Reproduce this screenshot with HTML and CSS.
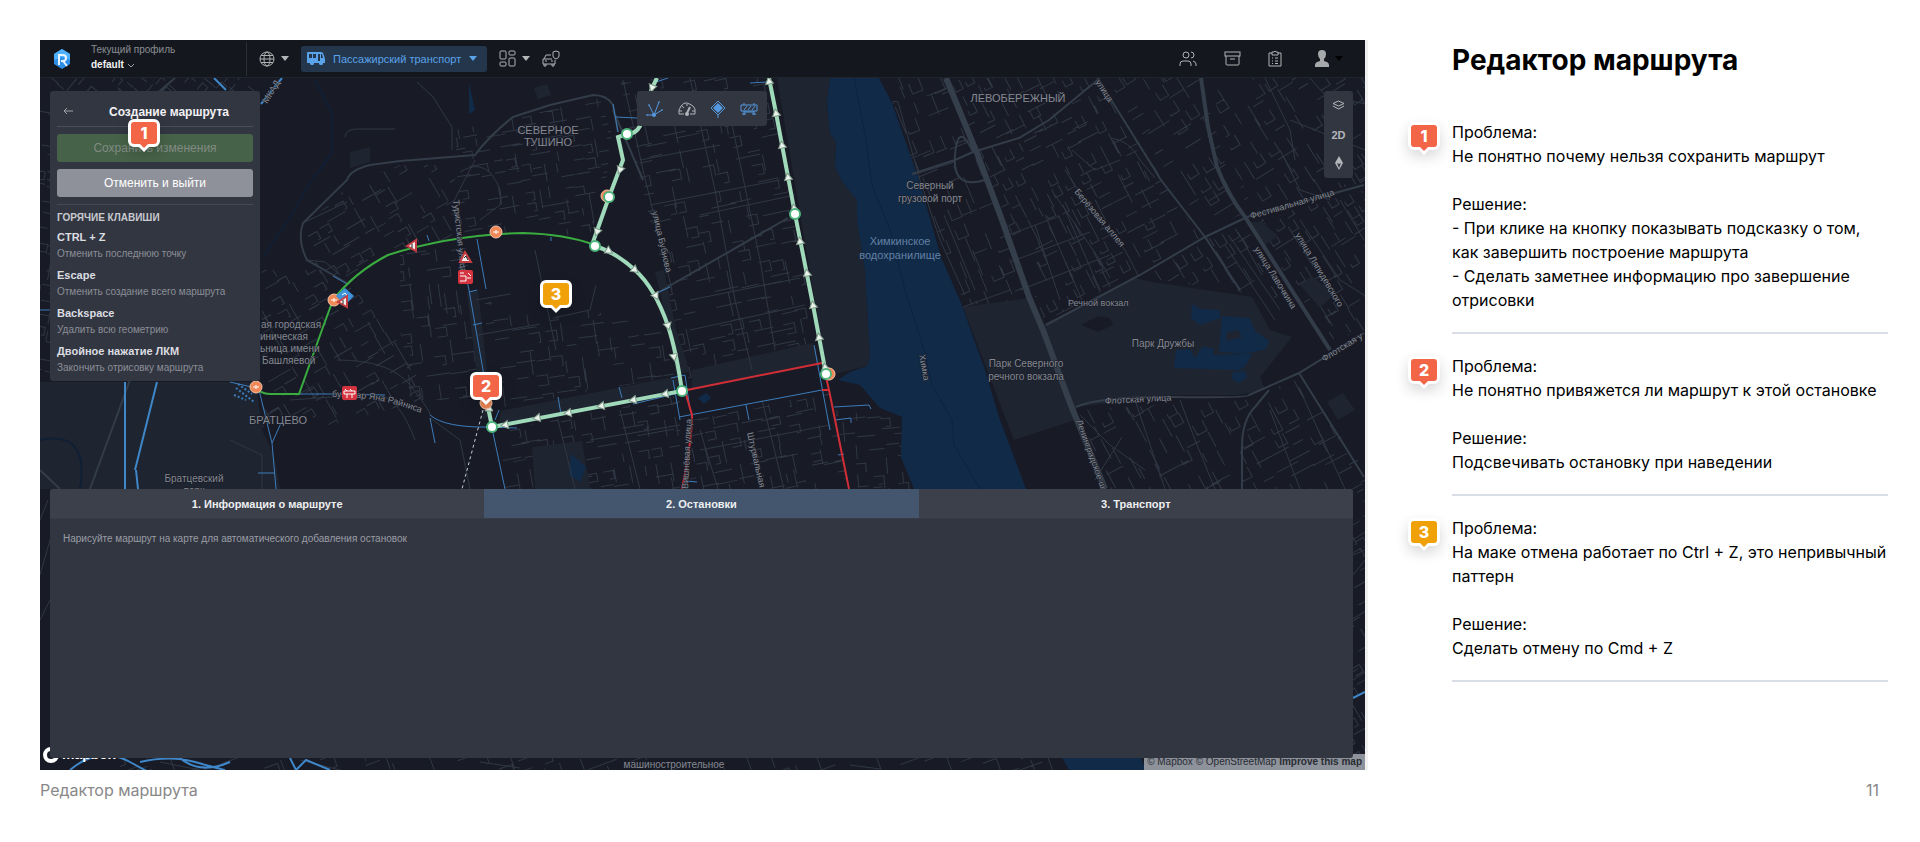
FILE: index.html
```html
<!DOCTYPE html>
<html lang="ru">
<head>
    <meta charset="utf-8">
    <title>Редактор маршрута</title>
    <link rel="stylesheet" href="styles.css">
</head>
<body>
    <main class="slide">
        <div class="figure">
            <div class="app">
                <svg class="map" viewBox="40 40 1325 730" preserveAspectRatio="xMinYMin slice" aria-label="Карта">
                    <rect class="land" x="40" y="40" width="2000" height="1200"/>
                    <g id="streets" class="street"></g>

                    <!-- parks -->
                    <g class="park">
                        <path d="M777 78H830L827 103 830 133 836 142 835 167 843 183 857 200 857 220 865 270 870 357 867 366 838 373 827 372Z"/>
                        <path d="M963 307L1029 298 1042 325 1135 278 1152 282 1252 297 1270 330 1292 337 1260 377 1265 390 1238 395 1174 395 1076 407 1075 420 1014 440Z"/>
                        <path d="M692 370L812 343 820 362 692 389Z"/>
                        <path d="M500 411L678 376 680 388 500 426Z"/>
                        <path d="M532 447L582 441 590 489H535Z"/>
                        <path d="M655 272L664 270 676 330 690 372 676 374 662 300Z"/>
                        <path d="M467 292L478 290 492 415 482 420Z"/>
                        <path d="M40 382H256L262 430 290 489H40Z"/>
                        <path d="M1248 222L1262 222 1278 236 1264 246Z"/>
                        <path d="M1327 402L1343 393 1355 410 1338 420Z"/>
                        <path d="M1300 285L1312 276 1334 294 1320 308Z"/>
                        <path d="M350 152L370 147V162L350 168Z"/>
                        <path d="M534 88L547 84 551 95 538 99Z"/>
                    </g>
                    <path class="land" d="M1081 325L1098 316 1110 318 1113 325 1098 332Z"/>
                    <path class="land" d="M270 430Q290 420 330 425L345 440 405 447 420 489H280Z"/>

                    <!-- water -->
                    <g class="water">
                        <path d="M830 78H879L892 103 919 180 941 257 961 303 985 370 999 417 1026 489 1146 770H1069L914 489 901 457 902 417 880 408 860 385 838 380 850 372 867 366 870 357 865 270 857 220 857 200 843 183 835 167 836 142 830 133 827 103Z"/>
                        <path d="M1192 304L1200 309 1219 310 1221 318 1200 325 1191 318Z"/>
                        <path d="M1222 316L1250 318 1255 331 1269 341 1266 349 1245 354 1219 352Z"/>
                        <path d="M1176 350L1190 349 1195 358 1202 347 1214 348 1213 355 1252 354 1246 365 1240 370 1174 368Z"/>
                        <path d="M1233 372L1245 371 1247 378 1239 383 1232 379Z"/>
                        <path d="M698 398L706 393 711 398 704 404Z"/>
                        <path d="M469 83L475 110 469 114Z"/>
                        <path d="M571 454L586 467 580 482 569 475Z"/>
                    </g>
                    <path class="park" d="M1227 332L1238 330 1242 337 1226 341Z"/>
                    <path class="stream" d="M854 78L866 140 872 185 890 230 905 290 924 350 932 385 952 420 954 445 980 489"/>
                    <path class="creek" d="M315 80L332 113 332 153 307 187 293 213 263 257M40 440Q90 430 80 489"/>

                    <!-- streets drawn one by one -->
                    <g class="street">
                        <path d="M417 82L433 97 452 127V150M475 160L463 183 453 203M345 137Q345 128 362 129L395 129M303 223L347 202M307 260L325 262 340 275M460 172Q480 160 492 175T500 205L480 220"/>
                        <path d="M623 80L643 170 660 240 672 290M690 78L715 190 735 300 752 370M725 90L760 260 775 350M640 160L720 145M650 205L780 180M700 215L795 195M690 300L800 278M690 330L805 305"/>
                        <path d="M620 130L645 125M535 250L556 350M553 318L590 310 596 285M476 300L510 294M478 335L540 324M558 420L575 489M620 410L640 489M700 430L718 489M590 440L680 425M762 400L784 489M700 450L830 425"/>
                        <path d="M894 104Q890 100 898 102L920 180 940 240 965 295M912 175L955 162M944 215L975 290M963 307L1010 290M1000 238L1060 216M1020 290L1110 255M1045 215L1082 300M1063 205L1100 290M1035 225L1060 300M1010 262L1090 232"/>
                        <path d="M1055 195L1100 260 1110 278M1065 170L1095 215 1125 250 1138 275M1110 138Q1130 140 1140 160L1155 178M1072 150L1095 170 1120 160"/>
                        <path d="M1122 437L1095 480M1080 415L1110 445 1145 470M1180 400L1195 440 1215 489M1135 400L1165 489M1270 410L1300 489M1300 390L1345 489M1225 245L1275 320M1232 240L1280 310M1238 232L1262 275"/>
                        <path d="M1310 78L1325 95 1365 104M1265 78L1290 130 1295 160M1290 120L1365 150M1280 150L1300 190 1330 200M1300 220L1340 280 1364 295M1340 200L1364 240"/>
                        <path d="M337 360Q390 360 410 385T430 415M290 400L360 395M415 440Q400 400 380 395M430 418L460 440 470 489M230 440L262 455V489"/>
                        <path d="M40 520L48 500M40 575L50 540M40 620L50 600M1353 540L1365 532M1353 555L1365 550M1353 575L1365 560M1353 680L1365 672M160 762L200 770M300 760L340 770M480 762L520 768M850 765L880 769"/>
                    </g>
                    <g class="road">
                        <path d="M400 161L475 155Q490 135 513 117L550 105 593 95Q607 95 613 105L618 132M400 161L370 165Q350 170 347 180L303 223Q297 240 307 260L347 283"/>
                        <path d="M657 293L788 218M613 110L643 180M955 160L973 152 1019 138 1049 120 1100 78M973 152Q958 120 955 155T985 180M912 174L955 160"/>
                        <path d="M1097 77L1161 180 1205 237 1240 290M1046 325L1140 275 1205 237 1247 217 1364 185"/>
                        <path d="M1076 407Q1100 396 1174 397T1249 395L1299 373 1364 333M1242 489V447Q1242 420 1255 407L1269 390M1299 373L1364 477"/>
                        <path d="M90 489L130 380M40 470L60 489M120 125L175 78"/>
                    </g>
                    <path class="road road-wide" d="M1201 78L1208 127 1217 167Q1228 195 1245 217L1330 350"/>
                    <path class="road highway" d="M946 78L977 153 1002 220 1029 297 1043 330 1070 403 1105 489"/>

                    <!-- segments with data -->
                    <g class="segment">
                        <path class="segment-wide" d="M282 78L261 104M136 470L138 489M157 382L135 470M125 382V489M214 78L226 90"/>
                        <path d="M477 239L486 289M460 248L469 290 483 370 493 433 505 489M469 292L477 290M473 325L482 323M259 390L272 443 276 489M230 382L256 388M272 443L281 423M258 473H275M297 394H332L385 395"/>
                        <path d="M430 415Q445 428 491 427L517 428M430 418L435 443M495 420L499 410M558 397L561 414M619 387L622 398M633 404L675 394"/>
                        <path d="M679 417L822 390M671 378L685 375 690 410M673 380L680 420M814 345L830 430M834 407L869 405 871 409M746 405L749 420M835 420L851 418V423M838 455L844 454"/>
                        <path d="M613 104L618 132M615 117L637 118M657 293L670 287M750 83L768 82M656 82L668 78M551 237V241M427 235L429 241M333 276L347 284M40 310H52M686 481L697 482"/>
                        <path class="segment-wide" d="M70 770Q100 745 130 762T150 770M140 762Q170 755 195 762T225 770M290 758L296 770 306 760 330 770M180 758Q200 775 230 762M1353 698L1365 692"/>
                    </g>
                    <path class="segment-dots" d="M236 388L254 402M234 395L246 400M238 384L252 394"/>
                    <path class="closed" d="M687 390L822 363M685 391L692 415Q692 440 682 489M826 377L829 390 849 489M822 390H829"/>
                    <path class="loaded" d="M256 387Q260 394 270 394H299L323 327 333 300Q355 272 388 255 450 235 523 233 565 234 595 245"/>
                    <path class="draft" d="M483 410L462 489"/>

                    <!-- the route itself -->
                    <g class="route">
                        <path d="M657 78L652 88 640 126Q636 134 627 134L618 137 623 160 609 197 593 242 595 246Q615 252 635 270T668 326Q676 350 682 391L492 427 487 402"/>
                        <path d="M769 78L776 113 795 214 813 305 826 374"/>
                    </g>
                    <g class="direction">
                        <path transform="translate(652 88) rotate(200)" d="M0-4L4 3H-4Z"/>
                        <path transform="translate(620 170) rotate(200)" d="M0-4L4 3H-4Z"/>
                        <path transform="translate(597 232) rotate(200)" d="M0-4L4 3H-4Z"/>
                        <path transform="translate(609 251) rotate(120)" d="M0-4L4 3H-4Z"/>
                        <path transform="translate(635 270) rotate(130)" d="M0-4L4 3H-4Z"/>
                        <path transform="translate(656 296) rotate(150)" d="M0-4L4 3H-4Z"/>
                        <path transform="translate(668 326) rotate(165)" d="M0-4L4 3H-4Z"/>
                        <path transform="translate(674 357) rotate(170)" d="M0-4L4 3H-4Z"/>
                        <path transform="translate(665 394) rotate(-100)" d="M0-4L4 3H-4Z"/>
                        <path transform="translate(633 400) rotate(-100)" d="M0-4L4 3H-4Z"/>
                        <path transform="translate(601 406) rotate(-100)" d="M0-4L4 3H-4Z"/>
                        <path transform="translate(568 413) rotate(-100)" d="M0-4L4 3H-4Z"/>
                        <path transform="translate(537 418) rotate(-100)" d="M0-4L4 3H-4Z"/>
                        <path transform="translate(505 425) rotate(-100)" d="M0-4L4 3H-4Z"/>
                        <path transform="translate(489 408)" d="M0-4L4 3H-4Z"/>
                        <path transform="translate(769 81) rotate(-10)" d="M0-4L4 3H-4Z"/>
                        <path transform="translate(776 113) rotate(-10)" d="M0-4L4 3H-4Z"/>
                        <path transform="translate(782 145) rotate(-10)" d="M0-4L4 3H-4Z"/>
                        <path transform="translate(788 177) rotate(-10)" d="M0-4L4 3H-4Z"/>
                        <path transform="translate(794 208) rotate(-10)" d="M0-4L4 3H-4Z"/>
                        <path transform="translate(800 241) rotate(-10)" d="M0-4L4 3H-4Z"/>
                        <path transform="translate(807 273) rotate(-10)" d="M0-4L4 3H-4Z"/>
                        <path transform="translate(813 305) rotate(-10)" d="M0-4L4 3H-4Z"/>
                        <path transform="translate(819 337) rotate(-10)" d="M0-4L4 3H-4Z"/>
                        <path transform="translate(825 367) rotate(-10)" d="M0-4L4 3H-4Z"/>
                    </g>

                    <!-- map labels -->
                    <g class="label">
                        <g class="label-district">
                            <text x="548" y="134">СЕВЕРНОЕ</text>
                            <text x="548" y="146">ТУШИНО</text>
                            <text x="1018" y="102">ЛЕВОБЕРЕЖНЫЙ</text>
                            <text x="278" y="424">БРАТЦЕВО</text>
                        </g>
                        <text x="930" y="189">Северный</text>
                        <text x="930" y="202">грузовой порт</text>
                        <text x="1163" y="347">Парк Дружбы</text>
                        <text x="1026" y="367">Парк Северного</text>
                        <text x="1026" y="380">речного вокзала</text>
                        <text x="194" y="482">Братцевский</text>
                        <text x="194" y="494">парк</text>
                        <text x="674" y="768">машиностроительное</text>
                        <g class="label-start">
                            <text x="261" y="328">ая городская</text>
                            <text x="260" y="340">иническая</text>
                            <text x="260" y="352">ьница имени</text>
                            <text x="262" y="364">Башляевой</text>
                        </g>
                        <g class="label-water">
                            <text x="900" y="245">Химкинское</text>
                            <text x="900" y="259">водохранилище</text>
                        </g>
                        <g class="label-street">
                            <path id="rainisa" class="label-line" d="M332 397Q385 396 430 417"/>
                            <text><textPath href="#rainisa">бульвар Яна Райниса</textPath></text>
                            <text x="1068" y="306">Речной вокзал</text>
                            <text transform="translate(267 104) rotate(-58)">МКАД</text>
                            <text transform="translate(453 200) rotate(84)">Туристская улица</text>
                            <text transform="translate(652 212) rotate(77)">улица Бубнова</text>
                            <text transform="translate(1095 82) rotate(57)">улица</text>
                            <text transform="translate(1074 192) rotate(50)">Берёзовая аллея</text>
                            <text transform="translate(1251 219) rotate(-16)">Фестивальная улица</text>
                            <text transform="translate(1254 249) rotate(58)">улица Лавочкина</text>
                            <text transform="translate(1295 235) rotate(59)">улица Ляпидевского</text>
                            <text transform="translate(1105 404) rotate(-3)">Флотская улица</text>
                            <text transform="translate(1324 362) rotate(-32)">Флотская у</text>
                            <text transform="translate(1076 421) rotate(70)">Ленинградское шоссе</text>
                            <text transform="translate(919 355) rotate(80)">Химка</text>
                            <text transform="translate(747 433) rotate(77)">Штурвальная улица</text>
                            <text transform="translate(688 489) rotate(-87)">Вишнёвая улица</text>
                        </g>
                    </g>

                    <!-- road signs and stops -->
                    <g class="stop">
                        <circle cx="256" cy="387" r="6"/><circle cx="334" cy="300" r="6"/><circle cx="496" cy="232" r="6"/>
                        <circle cx="607" cy="196" r="6"/><circle cx="829" cy="374" r="6"/><circle cx="486" cy="403" r="6"/>
                    </g>
                    <path class="stop-mark" d="M253 387H259M256 385V389M331 300H337M334 298V302M493 232H499M496 230V234"/>
                    <path class="sign-blue" d="M345 288L354 296 345 305 336 296Z"/>
                    <path class="sign-blue-mark" d="M342 295L345 293 348 297"/>
                    <g class="sign-warning">
                        <path d="M407 246L416 240V251Z"/><path d="M338 302L347 296V307Z"/><path d="M465 252L471 262H460Z"/>
                    </g>
                    <path class="sign-warning-mark" d="M412 244V248M343 300V304M464 258L466 256 468 260"/>
                    <g class="sign-closed">
                        <rect x="342" y="386" width="15" height="14" rx="2"/><rect x="458" y="270" width="15" height="14" rx="2"/>
                    </g>
                    <path class="sign-closed-mark" d="M344 391H355V394H344ZM347 394V398M352 394V398M345 389L347 391M350 389L352 391M460 273H464M460 276H466V281H460M468 273L471 276M467 278H471"/>
                    <g class="node">
                        <circle cx="627" cy="134" r="5"/><circle cx="609" cy="197" r="5"/><circle cx="595" cy="246" r="5"/>
                        <circle cx="682" cy="391" r="5"/><circle cx="492" cy="427" r="5"/><circle cx="795" cy="214" r="5"/><circle cx="826" cy="374" r="5"/>
                    </g>
                    <circle class="mapbox-ring" cx="51" cy="755" r="6"/>
                    <text class="mapbox-name" x="62" y="759">mapbox</text>
                </svg>

                <div class="attribution">
                    <a href="#">© Mapbox</a> <a href="#">© OpenStreetMap</a> <a href="#" class="improve">Improve this map</a>
                </div>

                <header class="topbar">
                    <svg class="logo" width="18" height="20" viewBox="0 0 18 20">
                        <path d="M9 0L17 5V15L9 20 1 15V5Z" fill="#2f8fe8"/>
                        <path d="M9 0L17 5V11L9 8 1 11V5Z" fill="#4fb0ff"/>
                        <path d="M6 16V6H10Q13 6 13 9T10 12H8M10 12L14 17" fill="none" stroke="#e8f4ff" stroke-width="2"/>
                    </svg>
                    <button class="profile" type="button">
                        <span class="profile-caption">Текущий профиль</span>
                        <span class="profile-name">default
                            <svg width="8" height="5" viewBox="0 0 8 5"><path d="M1 1L4 4 7 1" fill="none" stroke="#9a9da3"/></svg>
                        </span>
                    </button>
                    <nav class="tools">
                        <button class="tool" type="button" aria-label="Регион">
                            <svg class="line" width="16" height="16" viewBox="0 0 16 16"><circle cx="8" cy="8" r="7"/><ellipse cx="8" cy="8" rx="3" ry="7"/><path d="M1 8H15M2 4.500H14M2 11.500H14"/></svg>
                            <svg class="caret" width="8" height="5" viewBox="0 0 8 5"><path d="M0 0H8L4 5Z"/></svg>
                        </button>
                        <button class="tool tool-active" type="button">
                            <svg width="18" height="15" viewBox="0 0 18 15">
                                <path fill="#5aa2ea" fill-rule="evenodd" d="M1 1H14Q16 1 16.500 3L18 8V12H16A2 2 0 0 1 12 12H7A2 2 0 0 1 3 12H0V2Q0 1 1 1ZM2 3V7H5V3ZM6 3V7H9V3ZM11 3V10H13V3ZM14 3V7H16L15 3Z"/>
                                <circle cx="5" cy="12" r="2" fill="#5aa2ea"/><circle cx="14" cy="12" r="2" fill="#5aa2ea"/>
                            </svg>
                            Пассажирский транспорт
                            <svg class="caret" width="8" height="5" viewBox="0 0 8 5"><path d="M0 0H8L4 5Z"/></svg>
                        </button>
                        <button class="tool" type="button" aria-label="Виджеты">
                            <svg class="line" width="17" height="17" viewBox="0 0 17 17"><rect x="1" y="1" width="6" height="8" rx="1"/><rect x="10" y="1" width="6" height="4" rx="1"/><rect x="1" y="12" width="6" height="4" rx="1"/><rect x="10" y="8" width="6" height="8" rx="1"/></svg>
                            <svg class="caret" width="8" height="5" viewBox="0 0 8 5"><path d="M0 0H8L4 5Z"/></svg>
                        </button>
                        <button class="tool" type="button" aria-label="Безопасность">
                            <svg class="line" width="18" height="17" viewBox="0 0 18 17"><path d="M9 5H4L2 9H1V14H13V10M2 9H10M2 14V16H4V14M10 14V16H12V14M3 11H5M9 11H11M14 1L17 2V6Q17 8 14 9 11 8 11 6V2Z"/></svg>
                        </button>
                    </nav>
                    <div class="account">
                        <button class="tool" type="button" aria-label="Пользователи">
                            <svg class="line" width="18" height="17" viewBox="0 0 18 17"><circle cx="7" cy="5" r="3"/><path d="M1 16V14Q1 11 4 11H9Q12 11 12 14V16M12 2Q15 2 15 5T12 8M14 11Q17 12 17 14V16"/></svg>
                        </button>
                        <button class="tool" type="button" aria-label="Архив">
                            <svg class="line" width="17" height="17" viewBox="0 0 17 17"><rect x="1" y="2" width="15" height="4"/><path d="M2 6V14Q2 15 3 15H14Q15 15 15 14V6M6 9H11"/></svg>
                        </button>
                        <button class="tool" type="button" aria-label="Задачи">
                            <svg class="line" width="14" height="17" viewBox="0 0 14 17"><path d="M4 3H1V16H13V3H10M4 2H6Q7 0 8 2H10V5H4ZM4 8H5M7 8H10M4 11H5M7 11H10M4 13.500H5M7 13.500H10"/></svg>
                        </button>
                        <button class="tool account-user" type="button" aria-label="Аккаунт">
                            <svg width="14" height="17" viewBox="0 0 14 17"><path fill="#a7a8aa" d="M7 0Q11 0 11 4 11 7 9 9V11Q14 12 14 15V17H0V15Q0 12 5 11V9Q3 7 3 4 3 0 7 0Z"/></svg>
                            <svg class="caret caret-dark" width="8" height="5" viewBox="0 0 8 5"><path d="M0 0H8L4 5Z"/></svg>
                        </button>
                    </div>
                </header>

                <div class="workspace">
                    <div class="overlays">
                        <section class="panel">
                            <div class="panel-head">
                                <button class="back" type="button" aria-label="Назад">
                                    <svg width="10" height="8" viewBox="0 0 10 8"><path d="M10 4H1M4 1L1 4 4 7" fill="none" stroke="#a0a3aa"/></svg>
                                </button>
                                <h2>Создание маршрута</h2>
                            </div>
                            <div class="panel-actions">
                                <button class="btn btn-save" type="button">Сохранить изменения</button>
                                <button class="btn btn-exit" type="button">Отменить и выйти</button>
                            </div>
                            <h3>ГОРЯЧИЕ КЛАВИШИ</h3>
                            <dl class="hotkeys">
                                <dt>CTRL + Z</dt>
                                <dd>Отменить последнюю точку</dd>
                                <dt>Escape</dt>
                                <dd>Отменить создание всего маршрута</dd>
                                <dt>Backspace</dt>
                                <dd>Удалить всю геометрию</dd>
                                <dt>Двойное нажатие ЛКМ</dt>
                                <dd>Закончить отрисовку маршрута</dd>
                            </dl>
                        </section>

                        <div class="layers">
                            <button type="button" aria-label="Граф">
                                <svg width="18" height="18" viewBox="0 0 18 18" fill="none" stroke="#5499e0"><path d="M8 15L3 5M8 15L13 2M8 15L16 10M8 15H1"/><circle cx="8" cy="15" r="2" fill="#5499e0" stroke="none"/><path d="M12 2H14M2 5H4M16 9V11M1 14V16"/></svg>
                            </button>
                            <button type="button" aria-label="Скорость">
                                <svg width="18" height="16" viewBox="0 0 18 16" fill="none" stroke="#b0b3b9"><path d="M6 13H1Q0 9 3 5T9 2 15 5 17 13H12M9 3V5M4 5L6 7M1 10H4M14 10H17"/><path stroke-width="2" d="M9 12L12 6"/><circle cx="9" cy="13" r="2" fill="#b0b3b9" stroke="none"/></svg>
                            </button>
                            <button type="button" aria-label="Знаки">
                                <svg width="16" height="18" viewBox="0 0 16 18"><path d="M8 1L15 8 8 15 1 8Z" fill="none" stroke="#5499e0"/><path d="M8 3L13 8 8 13 3 8Z" fill="#5499e0"/><path d="M8 15V18" stroke="#5499e0"/></svg>
                            </button>
                            <button type="button" aria-label="Перекрытия">
                                <svg width="18" height="14" viewBox="0 0 18 14" fill="none" stroke="#5499e0"><path d="M1 3H17V9H1ZM4 1V3M14 1V3M4 9V13M14 9V13M2 12H6M12 12H16M4 8L7 4M8 8L11 4M12 8L15 4M4 10H14"/></svg>
                            </button>
                        </div>

                        <div class="view">
                            <button type="button" aria-label="Слои">
                                <svg width="13" height="10" viewBox="0 0 13 10" fill="none" stroke="#b4b6bb"><path d="M6.500 1L12 3.500 6.500 6 1 3.500Z"/><path d="M1 6L6.500 9 12 6"/></svg>
                            </button>
                            <button type="button">2D</button>
                            <button type="button" aria-label="Компас">
                                <svg width="8" height="14" viewBox="0 0 8 14"><path d="M4 0L8 7 4 14 0 7Z" fill="#b4b6bb"/><path d="M4 8L6 7 4 12 2 7Z" fill="#323641"/></svg>
                            </button>
                        </div>
                    </div>

                    <section class="details">
                        <div class="tabs" role="tablist">
                            <button class="tab" type="button" role="tab">1. Информация о маршруте</button>
                            <button class="tab tab-current" type="button" role="tab" aria-selected="true">2. Остановки</button>
                            <button class="tab" type="button" role="tab">3. Транспорт</button>
                        </div>
                        <p class="details-hint">Нарисуйте маршрут на карте для автоматического добавления остановок</p>
                    </section>
                </div>
            </div>
            <span class="badge pin-save">1</span>
            <span class="badge pin-stop">2</span>
            <span class="badge badge-warn pin-undo">3</span>
        </div>

        <aside class="notes">
            <h1>Редактор маршрута</h1>
            <article class="note">
                <span class="badge">1</span>
                <p>Проблема:<br>Не понятно почему нельзя сохранить маршрут</p>
                <p>Решение:<br>- При клике на кнопку показывать подсказку о том, как завершить построение маршрута<br>- Сделать заметнее информацию про завершение отрисовки</p>
            </article>
            <article class="note">
                <span class="badge">2</span>
                <p>Проблема:<br>Не понятно привяжется ли маршрут к этой остановке</p>
                <p>Решение:<br>Подсвечивать остановку при наведении</p>
            </article>
            <article class="note">
                <span class="badge badge-warn">3</span>
                <p>Проблема:<br>На маке отмена работает по Ctrl + Z, это непривычный паттерн</p>
                <p>Решение:<br>Сделать отмену по Cmd + Z</p>
            </article>
        </aside>
    </main>
    <footer class="footer">
        <span>Редактор маршрута</span>
        <span>11</span>
    </footer>
    <script src="map.js"></script>
</body>
</html>
```
FILE: styles.css
```css
* {
    box-sizing: border-box;
}

body {
    margin: 0;
    min-height: 100vh;
    display: flex;
    flex-direction: column;
    background-color: #fff;
    color: #000;
    font-family: Inter, sans-serif;
    font-size: 16px;
    line-height: 24px;
}

button {
    border: 0;
    padding: 0;
    background: none;
    color: inherit;
    font: inherit;
    cursor: pointer;
}

h1, h2, h3, p, dl, dd {
    margin: 0;
}

.slide {
    flex: 1;
    display: grid;
    grid-template-columns: minmax(0, 1fr) 436px;
    column-gap: 84px;
    padding: 40px 32px 0 40px;
}

.figure {
    position: relative;
    display: flex;
    border-right: 3px solid #f0f0f1;
}

/* application window */

.app {
    position: relative;
    flex: 1;
    display: flex;
    flex-direction: column;
    overflow: hidden;
    background-color: #181b26;
    color: #e4e5e8;
    font-family: "Liberation Sans", Arial, sans-serif;
    font-size: 10px;
    line-height: 12px;
}

.topbar {
    position: relative;
    display: flex;
    align-items: center;
    height: 38px;
    padding: 0 22px 0 13px;
    background-color: #14181e;
    border-bottom: 1px solid #20242c;
}

.profile {
    display: flex;
    flex-direction: column;
    width: 156px;
    margin-left: 20px;
    padding-bottom: 4px;
    border-right: 1px solid #2a2e35;
    text-align: left;
    line-height: 15px;
}

.profile-caption {
    color: #8b8e94;
}

.profile-name {
    color: #f2f2f3;
    font-weight: bold;
}

.tools {
    display: flex;
    align-items: center;
    gap: 12px;
    margin-left: 12px;
}

.tool {
    display: flex;
    align-items: center;
    gap: 6px;
    height: 26px;
}

.tool-active {
    gap: 8px;
    padding: 0 10px 0 6px;
    border-radius: 3px;
    background-color: #24364b;
    color: #5aa2ea;
    font-size: 11px;
}

.line {
    fill: none;
    stroke: #b0b1b3;
}

.caret {
    fill: #b4b5b7;
}

.tool-active .caret {
    fill: #5aa2ea;
}

.caret-dark {
    fill: #000;
}

.account {
    display: flex;
    gap: 27px;
    margin-left: auto;
}

.account-user {
    margin-left: 6px;
}

.workspace {
    position: relative;
    flex: 1;
    display: flex;
    flex-direction: column;
    justify-content: space-between;
    gap: 20px;
    padding: 13px 12px 12px 10px;
}

.overlays {
    display: grid;
    grid-template-columns: 1fr auto 1fr;
    align-items: start;
}

.panel {
    width: 210px;
    padding: 0 7px 4px;
    border-radius: 3px;
    background-color: #323641;
}

.panel-head {
    display: flex;
    align-items: center;
    height: 36px;
    padding: 6px 6px 0;
    border-bottom: 1px solid #4a4e58;
}

.panel-head h2 {
    flex: 1;
    padding-left: 18px;
    text-align: center;
    font-size: 12px;
    color: #f2f2f4;
}

.panel-actions {
    display: flex;
    flex-direction: column;
    gap: 7px;
    padding: 7px 0;
    border-bottom: 1px solid #454953;
}

.btn {
    height: 28px;
    border-radius: 3px;
    font-size: 12px;
}

.btn-save {
    background-color: #466248;
    color: #818b84;
}

.btn-exit {
    background-color: #8e9199;
    color: #fff;
}

.panel h3 {
    padding: 7px 0 1px;
    font-size: 10px;
    line-height: 12px;
    color: #c8cacf;
}

.hotkeys {
    line-height: 18px;
}

.hotkeys dt {
    padding-top: 4px;
    font-size: 11px;
    font-weight: bold;
    line-height: 16px;
    color: #dcdde1;
}

.hotkeys dd {
    color: #8b8e97;
}

.layers {
    grid-column: 2;
    display: flex;
    align-items: center;
    gap: 14px;
    height: 35px;
    padding: 0 9px;
    border-radius: 3px;
    background-color: #323641;
}

.layers svg {
    display: block;
}

.view {
    justify-self: end;
    display: flex;
    flex-direction: column;
    width: 29px;
    border-radius: 3px;
    background-color: #323641;
    color: #b4b6bb;
    font-size: 11px;
    font-weight: bold;
}

.view button {
    height: 29px;
}

.details {
    min-height: 269px;
    border-radius: 3px;
    overflow: hidden;
    background-color: #323641;
}

.tabs {
    display: grid;
    grid-template-columns: repeat(3, 1fr);
    border-bottom: 1px solid #383c47;
}

.tab {
    height: 29px;
    background-color: #3c404b;
    color: #eeeff1;
    font-size: 11px;
    font-weight: bold;
}

.tab-current {
    background-color: #44566e;
}

.details-hint {
    padding: 14px 13px;
    color: #9a9da5;
}

/* map */

.map {
    position: absolute;
    left: 0;
    top: 0;
    width: 100%;
    height: 100%;
}

.map path, .street {
    fill: none;
}

.map .land {
    fill: #181b26;
}

.map .park, .map .park path {
    fill: #1e2531;
}

.map .water path {
    fill: #112a48;
}

.stream {
    stroke: #0c2340;
}

.creek {
    stroke: #101f35;
    stroke-width: 2;
}

.street {
    stroke: #303744;
}

.road {
    stroke: #333c49;
    stroke-width: 2;
}

.road-wide {
    stroke-width: 4;
}

.highway {
    stroke: #353f4b;
    stroke-width: 6;
}

.segment, .segment-dots {
    stroke: #3c7cbb;
}

.segment-wide {
    stroke: #3f87c9;
    stroke-width: 2;
}

.segment-dots {
    stroke-width: 2;
    stroke-dasharray: 2 2;
}

.closed {
    stroke: #d22e37;
    stroke-width: 2;
}

.loaded {
    stroke: #3aac40;
    stroke-width: 2;
}

.draft {
    stroke: #c8cbd0;
    stroke-dasharray: 3 3;
}

.route {
    stroke: #a0dabb;
    stroke-width: 4;
}

.map .direction path {
    fill: #e9f3ec;
    stroke: #7d9787;
}

.label {
    fill: #858992;
    text-anchor: middle;
}

.label text {
    paint-order: stroke;
    stroke: #181b26;
}

.label-district {
    font-size: 11px;
}

.label-water {
    font-size: 11px;
    fill: #6381a4;
}

.label .label-water text {
    stroke: none;
}

.label-street {
    font-size: 9px;
}

.label-street, .label-start {
    text-anchor: start;
}

.stop {
    fill: #f08858;
    stroke: #f3c3a8;
}

.stop-mark, .sign-blue-mark, .sign-closed-mark {
    stroke: #fff;
}

.map .sign-blue {
    fill: #3f93dc;
}

.map .sign-warning path {
    fill: #f4eeee;
    stroke: #c33d42;
    stroke-width: 2;
}

.sign-warning-mark {
    stroke: #222;
}

.sign-closed {
    fill: #d3343f;
}

.node {
    fill: #fff;
    stroke: #4db57c;
    stroke-width: 2;
}

.mapbox-ring {
    fill: none;
    stroke: #fff;
    stroke-width: 4;
}

.mapbox-name {
    fill: #fff;
    font-size: 14px;
    font-weight: bold;
}

.attribution {
    position: absolute;
    right: 0;
    bottom: 0;
    padding: 1px 3px;
    background-color: #8d929b;
    line-height: 14px;
}

.attribution a {
    color: #2a2d33;
    text-decoration: none;
}

.attribution .improve {
    font-weight: bold;
}

/* numbered badges */

.badge {
    position: absolute;
    width: 32px;
    height: 28px;
    border: 3px solid #fff;
    border-radius: 6px;
    background-color: #f26547;
    box-shadow: 0 6px 14px rgba(0, 0, 0, .16);
    color: #fff;
    font-size: 16px;
    font-weight: 800;
    line-height: 22px;
    text-align: center;
}

.badge::before, .badge::after {
    content: "";
    position: absolute;
    left: 5px;
    top: 22px;
    border: 8px solid transparent;
    border-top-color: #fff;
    border-bottom: 0;
}

.badge::after {
    left: 9px;
    border-width: 4px;
    border-top-color: #f26547;
    border-bottom: 0;
}

.badge-warn {
    background-color: #f0a009;
}

.badge-warn::after {
    border-top-color: #f0a009;
}

.pin-save {
    left: 88px;
    top: 79px;
}

.pin-stop {
    left: 430px;
    top: 332px;
}

.pin-undo {
    left: 500px;
    top: 240px;
}

/* notes */

.notes h1 {
    padding-bottom: 40px;
    font-size: 28px;
    line-height: 40px;
    font-weight: bold;
}

.note {
    position: relative;
    display: grid;
    gap: 24px;
    margin-bottom: 20px;
    padding-bottom: 20px;
    border-bottom: 2px solid #d9dee6;
}

.note .badge {
    left: -44px;
    top: 2px;
}

.footer {
    display: flex;
    justify-content: space-between;
    height: 72px;
    padding: 8px 41px 0 40px;
    color: #888;
}
```
FILE: map.js
```js
// fills the residential blocks with small streets
// area: outline of the block, angle: direction of its streets, step: block size
var blocks = [
    { area: "50,78 260,78 255,92 50,92", angle: -50, step: 12 },
    { area: "40,92 50,92 50,382 40,382", angle: 10, step: 14 },
    { area: "305,225 350,185 400,165 455,165 455,240 395,250 345,285 305,258", angle: -30, step: 14 },
    { area: "455,130 515,118 600,98 612,135 605,190 590,235 460,235", angle: -10, step: 13 },
    { area: "620,78 768,78 800,240 825,360 690,385 640,180", angle: -12, step: 16 },
    { area: "400,250 465,245 485,400 410,400 400,320", angle: -8, step: 15 },
    { area: "262,270 330,270 400,330 425,400 330,425 262,430", angle: -30, step: 14 },
    { area: "485,300 540,320 590,310 660,330 675,376 490,410", angle: -8, step: 16 },
    { area: "500,430 680,395 680,489 505,489", angle: -10, step: 14 },
    { area: "692,420 830,392 850,489 690,489", angle: -12, step: 14 },
    { area: "835,410 900,418 912,489 850,489", angle: -5, step: 14 },
    { area: "880,78 945,78 1035,300 965,305", angle: 68, step: 18 },
    { area: "950,78 1098,78 1200,238 1045,322", angle: 63, step: 14 },
    { area: "1105,78 1200,78 1240,215 1205,230", angle: 58, step: 17 },
    { area: "1208,78 1365,78 1365,182 1248,212", angle: 58, step: 16 },
    { area: "1250,222 1365,190 1365,330 1330,340", angle: 58, step: 14 },
    { area: "1140,278 1205,240 1245,225 1290,300 1160,280", angle: 58, step: 15 },
    { area: "1080,410 1245,400 1300,378 1365,470 1365,489 1105,489", angle: 62, step: 16 },
    { area: "1353,489 1365,489 1365,755 1353,755", angle: -30, step: 14 },
    { area: "120,758 1140,758 1140,770 120,770", angle: -20, step: 20 }
];

var seed = 7;

function random() {
    seed = (seed * 16807) % 2147483647;
    return seed / 2147483647;
}

function shift(step) {
    return (random() - 0.5) * step * 0.5;
}

function drawBlock(block, i) {
    var points = block.area.split(" ").map(function(p) { return p.split(",").map(Number); });
    var xs = points.map(function(p) { return p[0]; });
    var ys = points.map(function(p) { return p[1]; });
    var cx = (Math.min(...xs) + Math.max(...xs)) / 2;
    var cy = (Math.min(...ys) + Math.max(...ys)) / 2;
    var size = Math.max(Math.max(...xs) - Math.min(...xs), Math.max(...ys) - Math.min(...ys)) * 0.75;
    var step = block.step;
    var d = "";

    for (var x = -size; x < size; x += step) {
        for (var y = -size; y < size; y += step) {
            var sx = Math.round(x + shift(step));
            var sy = Math.round(y + shift(step));
            var dice = random();
            if (dice < 0.35) {
                d += `M${sx} ${sy}h${Math.round(step * (0.6 + random()))}`;
            } else if (dice < 0.6) {
                d += `M${sx} ${sy}v${Math.round(step * (0.6 + random()))}`;
            } else if (dice < 0.85) {
                d += `M${sx} ${sy}h${Math.round(step * 0.7)}v${Math.round(step * 0.6)}h-${Math.round(step * random() * 0.7)}`;
            }
        }
    }

    return `<clipPath id="block${i}"><polygon points="${block.area}"/></clipPath>
        <g clip-path="url(#block${i})"><path transform="translate(${cx} ${cy}) rotate(${block.angle})" d="${d}"/></g>`;
}

document.getElementById("streets").innerHTML = blocks.map(drawBlock).join("");
```
